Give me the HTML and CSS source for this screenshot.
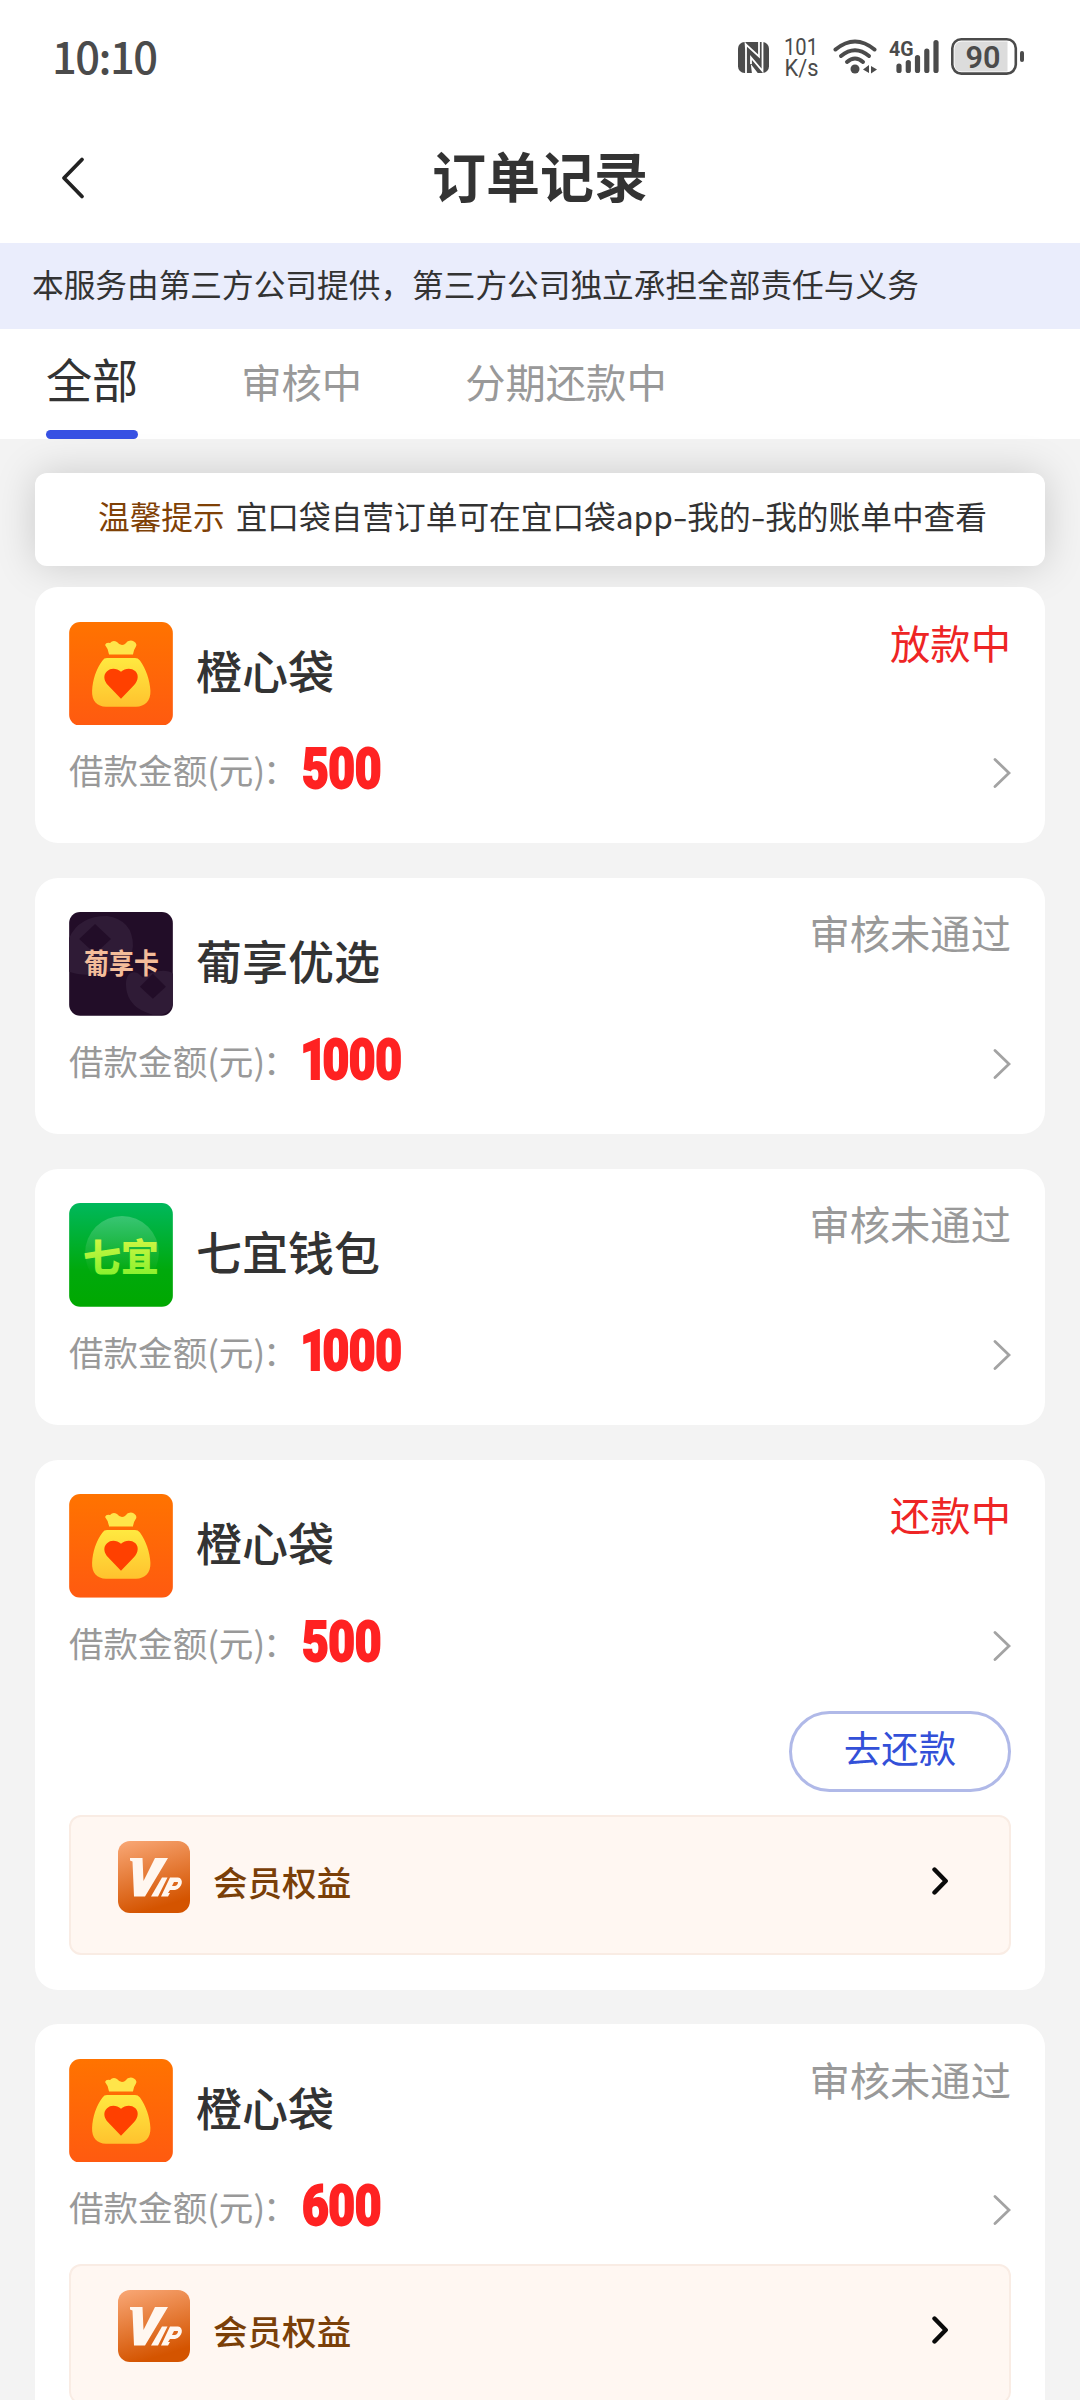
FILE: index.html
```html
<!DOCTYPE html>
<html lang="zh-CN">
<head>
<meta charset="utf-8">
<title>订单记录</title>
<link rel="stylesheet" href="styles.css">
</head>
<body>
<svg class="defs" width="0" height="0" aria-hidden="true">
  <defs>
    <linearGradient id="g-orange" x1="0" y1="0" x2="0" y2="1"><stop offset="0" stop-color="#ff7300"/><stop offset="1" stop-color="#ff5a10"/></linearGradient>
    <linearGradient id="g-bag" x1="0" y1="0" x2="0" y2="1"><stop offset="0" stop-color="#ffe940"/><stop offset="1" stop-color="#ffc22e"/></linearGradient>
    <linearGradient id="g-green" x1="0" y1="0" x2="0" y2="1"><stop offset="0" stop-color="#00b85c"/><stop offset=".65" stop-color="#00a90c"/><stop offset="1" stop-color="#00a800"/></linearGradient>
    <linearGradient id="g-shine" x1="0" y1="0" x2="0" y2="1"><stop offset="0" stop-color="#fff" stop-opacity=".22"/><stop offset=".8" stop-color="#fff" stop-opacity="0"/></linearGradient>
    <linearGradient id="g-lime" x1="0" y1="0" x2="0" y2="1"><stop offset="0" stop-color="#e6f84a"/><stop offset="1" stop-color="#7cf02a"/></linearGradient>
    <linearGradient id="g-vip" x1="0" y1="0" x2=".3" y2="1"><stop offset="0" stop-color="#f9a877"/><stop offset="1" stop-color="#d45400"/></linearGradient>
  </defs>
  <symbol id="logo-bag" viewBox="0 0 104 104">
    <rect width="104" height="104" rx="11" fill="url(#g-orange)"/>
    <path d="M36 23 Q37 20 41 21 Q44 17.500 48 20 Q52 25 56 22 Q60 17 65 19.500 Q69 22 66.500 25.500 Q64.500 28 64 32.500 H40 Q39.500 27 36 23Z" fill="#ffe54a"/>
    <path d="M38 36 H66 Q69 36 71 38.500 C77 47 81 58 81.500 69 C82 79 76 85 67 85 H37 C28 85 22.500 79 23 69 C23.500 58 27 47 33.500 38.500 Q35 36 38 36Z" fill="url(#g-bag)"/>
    <path d="M52 77 L39 63.500 C34.500 59 34 53 38 49.500 C42 45.500 48 46.500 52 50 C56 46.500 62 45.500 66.500 49.500 C70 53 69.500 59 65 63.500Z" fill="#ff4000"/>
  </symbol>
  <symbol id="logo-vip" viewBox="0 0 72 72">
    <rect width="72" height="72" rx="12" fill="url(#g-vip)"/>
    <path d="M12 17 H24.500 L25.500 40 L37 17 H50 L27 55.500 H16 L14.500 20.500 L12 19.500Z" fill="#fff7f0"/>
    <path d="M44 36.500 H49.500 L40 55.500 H33Z" fill="#fff7f0"/>
    <path fill-rule="evenodd" d="M52 36.500 H60 C66 37 65 47 57 49 H52 L50 52 H52 L50 55.500 H43Z M56 41 L54 45 H57 Q60 44 60 41Z" fill="#fff7f0"/>
  </symbol>
  <symbol id="chevron" viewBox="0 0 18 30"><path d="M2 1.500 L16 15 L2 28.500" fill="none" stroke="#a3a3a3" stroke-width="2.800" stroke-linecap="round" stroke-linejoin="miter"/></symbol>
  <symbol id="chevron-bold" viewBox="0 0 17 28"><path d="M2.500 2.500 L13.700 14 L2.500 25.500" fill="none" stroke="#0a0a0a" stroke-width="4.400" stroke-linecap="round" stroke-linejoin="round"/></symbol>
</svg>

<header class="status-bar">
  <span class="clock">10:10</span>
  <svg class="indicators" width="292" height="44" viewBox="735 35 292 44">
    <rect x="738" y="42" width="31" height="31" rx="6.500" fill="#4b4b4b"/>
    <path d="M746 74 V44.500 L759 56.500 V41" fill="none" stroke="#fff" stroke-width="1.800"/>
    <path d="M762.500 41 V71 L751 57.500 V64" fill="none" stroke="#fff" stroke-width="1.800"/>
    <path d="M752 74 L750.800 64 L758.500 74Z M744.500 41 L747 45 L746 50 L745 48Z" fill="#fff"/>
    <text x="784" y="55" textLength="34" lengthAdjust="spacingAndGlyphs" class="net">101</text>
    <text x="784.500" y="76" textLength="34" lengthAdjust="spacingAndGlyphs" class="net">K/s</text>
    <g fill="none" stroke="#4b4b4b" stroke-width="4" stroke-linecap="round"><path d="M835.500 49.500 Q855 33.500 874.500 49.500"/><path d="M841 56 Q855 44.500 869 56"/><path d="M847 62 Q855 55 863 62"/></g>
    <circle cx="855" cy="69" r="4.500" fill="#4b4b4b"/>
    <path d="M863 69.500 L869 65 V73Z M871 66 L877 69.500 L871 73.500Z" fill="#4b4b4b"/>
    <text x="889" y="56" textLength="24.500" lengthAdjust="spacingAndGlyphs" class="gen">4G</text>
    <g stroke="#4b4b4b" stroke-width="5.200" stroke-linecap="round"><path d="M899 66V70.500"/><path d="M908.300 62.500V70.500"/><path d="M917.500 57.500V70.500"/><path d="M926.800 51V70.500"/><path d="M936 42.500V70.500"/></g>
    <rect x="952.300" y="39.300" width="63.500" height="34.300" rx="9" fill="#fff" stroke="#4b4b4b" stroke-width="2.600"/>
    <path d="M962 41.500 H1007.500 V71.500 H962 Q954.500 71.500 954.500 64 V49 Q954.500 41.500 962 41.500Z" fill="#dcdcdc"/>
    <rect x="1020" y="51" width="4" height="11" rx="2" fill="#4b4b4b"/>
    <text x="965.500" y="68" textLength="35" lengthAdjust="spacingAndGlyphs" class="charge">90</text>
  </svg>
</header>

<nav class="title-bar">
  <svg class="back" width="26" height="44" viewBox="0 0 26 44"><path d="M22 3.500 L4 22 L22 40.500" fill="none" stroke="#222" stroke-width="3.800" stroke-linecap="round" stroke-linejoin="round"/></svg>
  <h1>订单记录</h1>
</nav>

<div class="banner">本服务由第三方公司提供，第三方公司独立承担全部责任与义务</div>

<div class="tabs">
  <span class="tab active">全部</span>
  <span class="tab">审核中</span>
  <span class="tab">分期还款中</span>
</div>

<main class="content">
  <div class="notice"><b>温馨提示</b><span>宜口袋自营订单可在宜口袋app<i>-</i>我的<i>-</i>我的账单中查看</span></div>

  <section class="orders">
    <article class="card">
      <div class="head"><svg class="logo"><use href="#logo-bag"/></svg><h2>橙心袋</h2><span class="state hot">放款中</span></div>
      <div class="amount"><span class="label">借款金额(元)<i>：</i></span><span class="num">500</span><svg class="go"><use href="#chevron"/></svg></div>
    </article>

    <article class="card">
      <div class="head">
        <svg class="logo" viewBox="0 0 104 104">
          <rect width="104" height="104" rx="11" fill="#220d28"/>
          <path d="M0 26 Q10 4 38 4 Q64 8 64 34 Q62 56 40 60 Q16 66 0 60Z" fill="#2f1b36"/>
          <path d="M26 12 L42 27 L26 42 L10 27Z" fill="#220d28"/>
          <path d="M57 72 C57 60 66 56 74 66 C80 60 98 56 104 62 V93 Q102 100 93 103 H84 C66 98 57 88 57 72Z" fill="#2f1b36"/>
          <path d="M84 62 L97 75 L84 87 L71 75Z" fill="#220d28"/>
          <g transform="translate(0 62) scale(1 1.150)"><text x="15" y="0" class="logo-grape-text">葡享卡</text></g>
        </svg>
        <h2>葡享优选</h2><span class="state">审核未通过</span>
      </div>
      <div class="amount"><span class="label">借款金额(元)<i>：</i></span><span class="num"><i>1</i>000</span><svg class="go"><use href="#chevron"/></svg></div>
    </article>

    <article class="card">
      <div class="head">
        <svg class="logo" viewBox="0 0 104 104">
          <rect width="104" height="104" rx="11" fill="url(#g-green)"/>
          <circle cx="53" cy="50" r="37" fill="url(#g-shine)"/>
          <text x="14" y="68" class="logo-seven-text" fill="url(#g-lime)">七宜</text>
        </svg>
        <h2>七宜钱包</h2><span class="state">审核未通过</span>
      </div>
      <div class="amount"><span class="label">借款金额(元)<i>：</i></span><span class="num"><i>1</i>000</span><svg class="go"><use href="#chevron"/></svg></div>
    </article>

    <article class="card">
      <div class="head"><svg class="logo"><use href="#logo-bag"/></svg><h2>橙心袋</h2><span class="state hot">还款中</span></div>
      <div class="amount"><span class="label">借款金额(元)<i>：</i></span><span class="num">500</span><svg class="go"><use href="#chevron"/></svg></div>
      <div class="actions"><button class="repay">去还款</button></div>
      <div class="vip after-action"><svg class="vip-logo"><use href="#logo-vip"/></svg><span>会员权益</span><svg class="vip-go"><use href="#chevron-bold"/></svg></div>
    </article>

    <article class="card">
      <div class="head"><svg class="logo"><use href="#logo-bag"/></svg><h2>橙心袋</h2><span class="state">审核未通过</span></div>
      <div class="amount"><span class="label">借款金额(元)<i>：</i></span><span class="num">600</span><svg class="go"><use href="#chevron"/></svg></div>
      <div class="vip"><svg class="vip-logo"><use href="#logo-vip"/></svg><span>会员权益</span><svg class="vip-go"><use href="#chevron-bold"/></svg></div>
    </article>
  </section>
</main>
</body>
</html>
```
FILE: styles.css
```css
* { box-sizing: border-box; }
html { height: 2400px; overflow: hidden; }
body {
  margin: 0;
  width: 1080px;
  height: 2400px;
  overflow: hidden;
  display: flex;
  flex-direction: column;
  background: #f3f3f3;
  color: #333;
  font-family: "Noto Sans CJK SC", "Noto Sans", sans-serif;
}
h1, h2 { margin: 0; }
i { font-style: normal; }
svg { display: block; flex: none; }
.defs { position: absolute; }

.status-bar {
  flex: none;
  height: 115px;
  padding: 0 53px 0 52px;
  display: flex;
  align-items: center;
  justify-content: space-between;
  background: #fff;
}
.clock { margin-bottom: 4px; font-size: 43.500px; line-height: 64px; font-weight: 500; color: #4b4b4b; letter-spacing: -1.500px; }
.indicators { margin-bottom: 1px; }
.net { font: 400 23.500px Roboto, sans-serif; fill: #4b4b4b; }
.gen { font: 700 21px Roboto, sans-serif; fill: #4b4b4b; }
.charge { font: 600 31px Roboto, sans-serif; fill: #4b4b4b; }

.title-bar {
  flex: none;
  height: 128px;
  display: grid;
  grid-template-columns: 60px 1fr 60px;
  align-items: center;
  background: #fff;
}
.back { justify-self: end; margin: -2px -26px 0 0; }
.title-bar h1 { text-align: center; font-size: 54px; line-height: 80px; font-weight: 700; margin-top: -8px; }

.banner {
  flex: none;
  height: 86px;
  padding-left: 32px;
  background: #eaedfc;
  font-size: 31.680px;
  line-height: 81px;
  white-space: nowrap;
}

.tabs {
  flex: none;
  height: 110px;
  padding-left: 46px;
  display: flex;
  background: #fff;
}
.tab { font-size: 40.320px; line-height: 103px; color: #999; margin-right: 103px; }
.tab.active {
  position: relative;
  font-size: 46.080px;
  line-height: 98px;
  color: #333;
}
.tab.active::after {
  content: "";
  position: absolute;
  left: 0;
  right: 0;
  bottom: 0;
  height: 9px;
  border-radius: 4.500px;
  background: #3751e3;
}

.content { padding: 34px 35px 0; }
.notice {
  height: 93px;
  padding-left: 63px;
  display: flex;
  gap: 11px;
  border-radius: 12px;
  background: #fff;
  box-shadow: 0 0 40px rgba(0, 0, 0, .17);
  font-size: 31.680px;
  line-height: 84px;
  white-space: nowrap;
}
.notice b { font-weight: 400; color: #7f4106; }
.notice i { display: inline-block; width: 14.500px; text-align: center; transform: scaleX(1.350); }

.orders { margin-top: 21px; display: flex; flex-direction: column; gap: 34.560px; position: relative; }
.card { padding: 34.560px 34px; border-radius: 23px; background: #fff; }
.head { height: 103.680px; display: flex; }
.logo { width: 104px; height: 103.680px; }
.head h2 { margin-left: 23px; font-size: 46px; line-height: 94px; font-weight: 500; }
.state { margin-left: auto; font-size: 40.320px; line-height: 40px; color: #999; }
.hot { color: #ee2525; }
.amount { height: 83.600px; padding-top: 4px; display: flex; align-items: center; }
.label { width: 233px; font-size: 34.560px; line-height: 50px; color: #999; white-space: nowrap; }
.label i { margin-left: -2px; }
.num {
  font: 900 55px/60px Roboto, sans-serif;
  color: #ff2222;
  letter-spacing: -.5px;
  -webkit-text-stroke: 1.800px #ff2222;
  transform: scaleX(.84);
  transform-origin: left center;
}
.num i { margin: 0 -5px 0 -2px; }
.go { width: 18px; height: 30px; margin-left: auto; margin-top: 8px; }
.actions { margin-top: 29.500px; display: flex; justify-content: flex-end; }
.repay {
  width: 222px;
  height: 81px;
  padding: 0 0 9px;
  border: 3px solid #b0b9e8;
  border-radius: 41px;
  background: #fff;
  color: #3350d8;
  font: 400 37.440px "Noto Sans CJK SC", sans-serif;
}
.vip {
  height: 140px;
  margin-top: 18.500px;
  padding: 24px 60px 0 47px;
  display: flex;
  align-items: flex-start;
  border: 2px solid #f9ece4;
  border-radius: 12px;
  background: #fff7f2;
  color: #7a3f08;
}
.vip.after-action { margin-top: 23px; }
.vip-logo { width: 72px; height: 72px; }
.vip span { margin-left: 23px; font-size: 34.560px; line-height: 80px; font-weight: 500; }
.vip-go { width: 17px; height: 28px; margin: 26px 0 0 auto; }

.logo-grape-text { font: 700 25px "Noto Sans CJK SC", sans-serif; fill: #f4bd9a; }
.logo-seven-text { font: 900 38px "Noto Sans CJK SC", sans-serif; }
```
